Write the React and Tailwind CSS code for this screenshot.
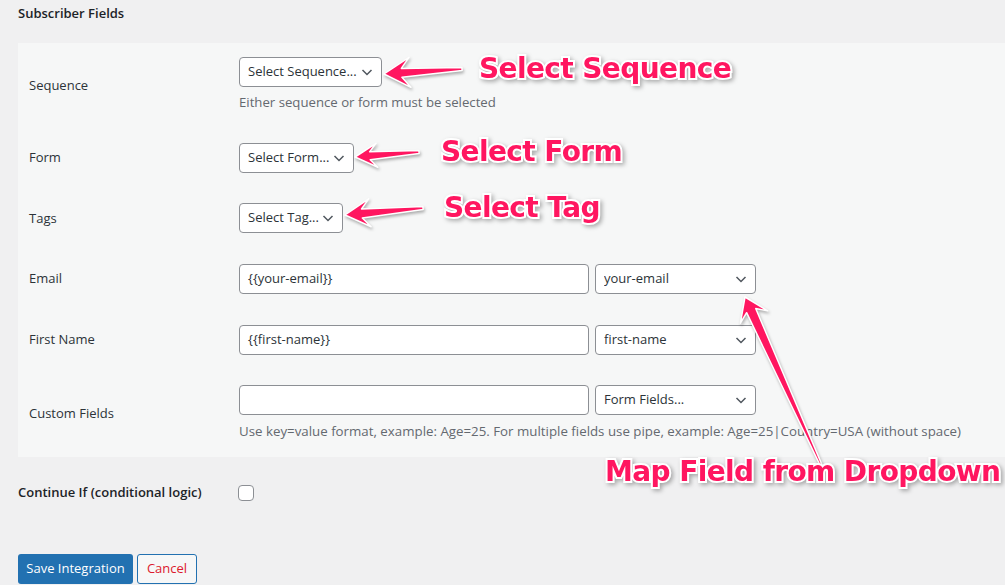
// Subscriber fields settings panel with pink callout annotations
const FONT = { fontFamily: '"Open Sans", "Noto Sans", sans-serif' };

function Chevron() {
	return (
		<svg width="16" height="16" viewBox="0 0 16 16" className="shrink-0">
			<path d="M3.5 6l4.5 4.5 4.5-4.5" fill="none" stroke="#50575e" strokeWidth="1.5" />
		</svg>
	);
}

function FakeSelect({ text, width }) {
	return (
		<div
			className={`${width} h-[30px] flex items-center justify-between bg-white border border-[#8c8f94] rounded-[4px] pl-[8px] pr-[6px] text-[13px] text-[#2c3338]`}>
			<span className="truncate">{text}</span>
			<Chevron />
		</div>
	);
}

function FakeInput({ value }) {
	return (
		<div className="w-[350px] h-[30px] flex items-center bg-white border border-[#8c8f94] rounded-[4px] px-[8px] text-[13px] text-[#2c3338]">
			{value}
		</div>
	);
}

function Row({ label, height, children }) {
	return (
		<div className={`flex items-center ${height}`}>
			<div className="w-[221px] pl-[11px] pt-[1px] text-[13px] text-[#2c3338]">{label}</div>
			<div className="flex flex-col">{children}</div>
		</div>
	);
}

// arrow polygon from tip to tail
function arrowPoints(tip, tail, headLen, headHalf, near, far) {
	const dx = tail[0] - tip[0];
	const dy = tail[1] - tip[1];
	const len = Math.hypot(dx, dy);
	const u = [dx / len, dy / len];
	const n = [-u[1], u[0]];
	const at = (d, s) => [tip[0] + u[0] * d + n[0] * s, tip[1] + u[1] * d + n[1] * s];
	const pts = [
		tip,
		at(headLen, headHalf),
		at(headLen * 0.68, near / 2),
		[tail[0] + n[0] * (far / 2), tail[1] + n[1] * (far / 2)],
		[tail[0] - n[0] * (far / 2), tail[1] - n[1] * (far / 2)],
		at(headLen * 0.68, -near / 2),
		at(headLen, -headHalf),
	];
	return pts.map((p) => p.join(',')).join(' ');
}

const ARROWS = [
	arrowPoints([384, 74], [462, 69], 26, 15, 9, 3),
	arrowPoints([355, 157], [419, 152], 22, 12, 8, 3),
	arrowPoints([345, 215], [423, 208], 25, 14, 9, 3),
	arrowPoints([745, 297], [821, 465], 22, 15, 10, 2),
];

function Callout({ text, className }) {
	return (
		<div
			className={`absolute font-bold leading-none text-[28px] tracking-[-0.6px] text-[#ff1660] whitespace-nowrap [paint-order:stroke_fill] [-webkit-text-stroke:4px_#ffffff] drop-shadow-[2px_2px_2px_rgba(0,0,0,0.3)] ${className}`}
			style={{ fontFamily: '"DejaVu Sans", Verdana, sans-serif' }}>
			{text}
		</div>
	);
}

export default function App() {
	return (
		<div className="relative w-[1005px] h-[585px] overflow-hidden bg-[#f0f0f1]" style={FONT}>
			{/* Heading */}
			<div className="h-[43px] pl-[18px] pt-[4px] text-[13px] font-semibold text-[#1d2327]">
				Subscriber Fields
			</div>

			{/* Panel */}
			<div className="ml-[18px] h-[414px] bg-[#f6f7f7] flex flex-col">
				<Row label="Sequence" height="h-[84px]">
					<FakeSelect text="Select Sequence..." width="w-[143px]" />
					<p className="mt-[6px] text-[13.2px] text-[#646970]">Either sequence or form must be selected</p>
				</Row>
				<Row label="Form" height="h-[61px]">
					<FakeSelect text="Select Form..." width="w-[115px]" />
				</Row>
				<Row label="Tags" height="h-[60px]">
					<FakeSelect text="Select Tag..." width="w-[104px]" />
				</Row>
				<Row label="Email" height="h-[61px]">
					<div className="flex items-center gap-[6px]">
						<FakeInput value="{{your-email}}" />
						<FakeSelect text="your-email" width="w-[161px]" />
					</div>
				</Row>
				<Row label="First Name" height="h-[61px]">
					<div className="flex items-center gap-[6px]">
						<FakeInput value="{{first-name}}" />
						<FakeSelect text="first-name" width="w-[161px]" />
					</div>
				</Row>
				<Row label="Custom Fields" height="h-[87px]">
					<div className="flex items-center gap-[6px]">
						<FakeInput value="" />
						<FakeSelect text="Form Fields..." width="w-[161px]" />
					</div>
					<p className="mt-[7px] text-[13.3px] text-[#646970] whitespace-nowrap">
						Use key=value format, example: Age=25. For multiple fields use pipe, example: Age=25|Country=USA (without space)
					</p>
				</Row>
			</div>

			{/* Conditional logic */}
			<div className="flex items-center h-[72px] pl-[18px]">
				<div className="w-[220px] text-[13px] font-semibold text-[#1d2327]">Continue If (conditional logic)</div>
				<div className="w-[16px] h-[16px] bg-white border border-[#8c8f94] rounded-[4px]" />
			</div>

			{/* Buttons */}
			<div className="flex gap-[4px] pl-[18px] mt-[25px]">
				<button className="h-[30px] w-[115px] rounded-[3px] bg-[#2271b1] text-white text-[13px]">Save Integration</button>
				<button className="h-[30px] w-[60px] rounded-[3px] border border-[#2271b1] bg-[#f6f7f7] text-[#dc1a2e] text-[13px]">
					Cancel
				</button>
			</div>

			{/* Annotations */}
			<svg className="absolute left-0 top-0 pointer-events-none" width="1005" height="585">
				{ARROWS.map((pts, i) => (
					<polygon
						key={i}
						points={pts}
						fill="#ff1660"
						stroke="#ffffff"
						strokeWidth="1.5"
						strokeLinejoin="round"
						style={{ filter: 'drop-shadow(1px 2px 1.5px rgba(0,0,0,0.3))' }}
					/>
				))}
			</svg>
			<Callout text="Select Sequence" className="left-[479px] top-[55px]" />
			<Callout text="Select Form" className="left-[441px] top-[138px]" />
			<Callout text="Select Tag" className="left-[444px] top-[194px]" />
			<Callout text="Map Field from Dropdown" className="left-[605px] top-[458px]" />
		</div>
	);
}
